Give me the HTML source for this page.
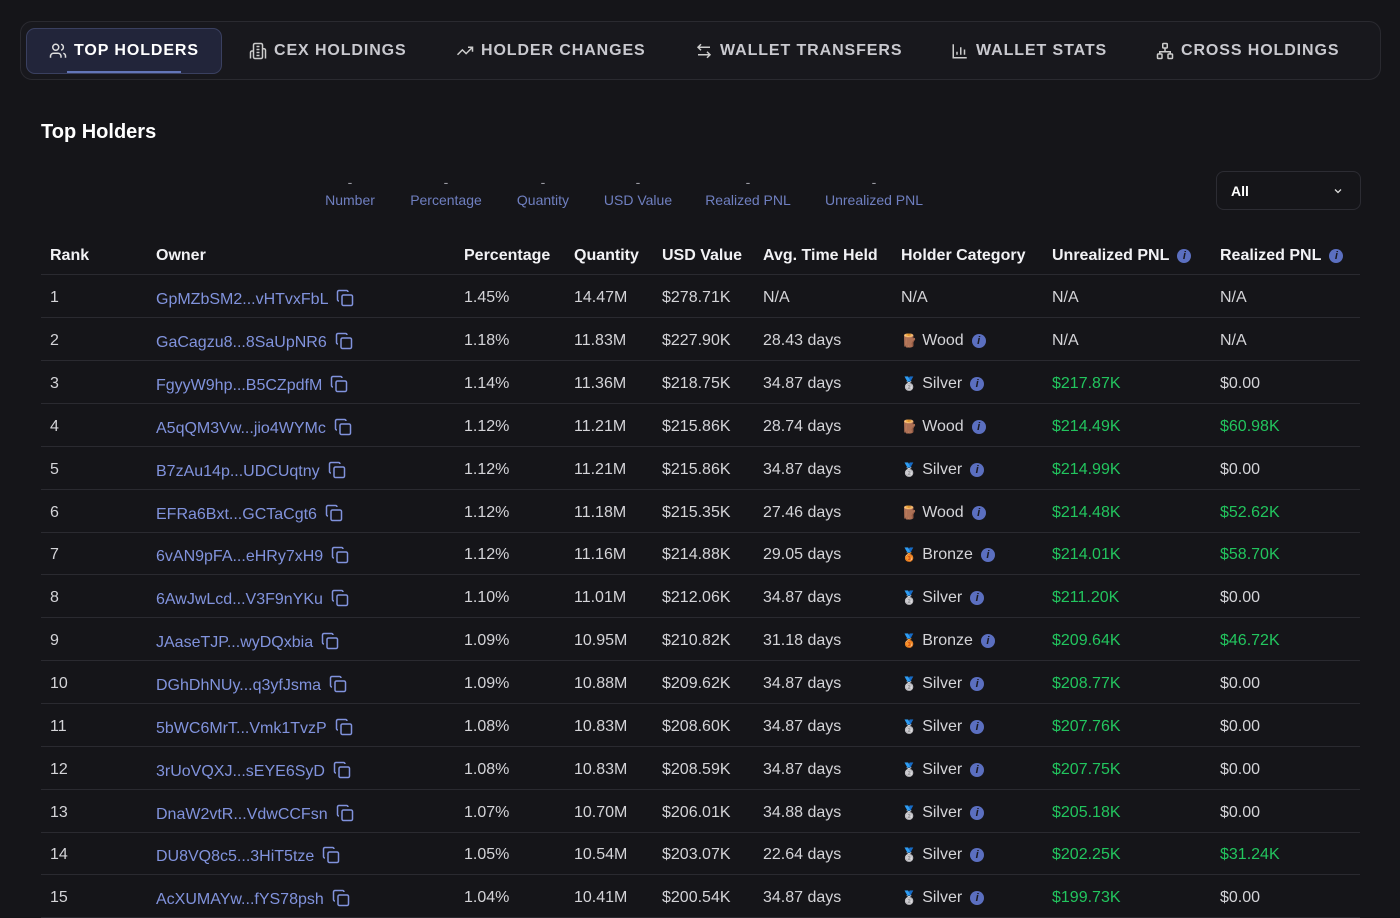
<!DOCTYPE html>
<html><head><meta charset="utf-8"><style>
*{margin:0;padding:0;box-sizing:border-box}
body{width:1400px;height:915px;background:#151519;font-family:"Liberation Sans",sans-serif;color:#e4e4e7;position:relative;overflow:hidden}
.bar{position:absolute;left:20px;top:21px;width:1361px;height:59px;border:1px solid #2a2a30;border-radius:12px;background:#18181d}
.tab{position:absolute;top:28px;height:46px;display:flex;align-items:center;font-size:16px;font-weight:bold;letter-spacing:0.9px;color:#c9c9cf}
.tab svg{margin-right:7px}
.act{left:26px;width:196px;border:1px solid #3a4060;border-radius:9px;background:#22253a;justify-content:center;color:#fff}
.act:after{content:"";position:absolute;left:40px;right:40px;bottom:0;height:2px;background:#6376b8}
h1{position:absolute;left:41px;top:121px;font-size:20px;font-weight:bold;color:#fff}
.st{position:absolute;top:173px;text-align:center;color:#6f7fc0;font-size:14px;line-height:18px}
.st b{display:block;color:#9a9aa2;font-weight:normal}
.sel{position:absolute;left:1216px;top:171px;width:145px;height:39px;border:1px solid #2c2c33;border-radius:8px;font-size:14px;font-weight:bold;color:#fff;padding:11px 14px}
.sel svg{position:absolute;right:16px;top:13px}
.r{position:absolute;left:41px;width:1319px;height:43px;border-bottom:1px solid #2a2a30;font-size:16px;color:#d4d4d8}
.r span{position:absolute;top:14px;white-space:nowrap}
.hd{font-weight:bold;color:#f2f2f5}
.c0{left:9px}.c1{left:115px}.c2{left:423px}.c3{left:533px}.c4{left:621px}.c5{left:722px}.c6{left:860px}.c7{left:1011px}.c8{left:1179px}
.own{color:#8193dd}
.g{color:#22c55e}
.i{display:inline-block;width:14px;height:14px;border-radius:50%;background:#5b6fc0;color:#1a1a22;font-size:11px;font-weight:bold;text-align:center;line-height:14px;vertical-align:1px;margin-left:8px}
.cp{display:inline-block;vertical-align:-3px;margin-left:8px}
.e{font-size:13px;margin-right:5px}
</style></head><body>
<div class="bar"></div>
<div class="tab act"><svg width="18" height="18" viewBox="0 0 24 24" fill="none" stroke="#ddd" stroke-width="2"><circle cx="9" cy="7" r="4"/><path d="M2 21v-2a4 4 0 0 1 4-4h6a4 4 0 0 1 4 4v2M16 3.1a4 4 0 0 1 0 7.8M22 21v-2a4 4 0 0 0-3-3.9"/></svg>TOP HOLDERS</div>
<div class="tab" style="left:249px"><svg width="18" height="18" viewBox="0 0 24 24" fill="none" stroke="#ccc" stroke-width="2"><rect x="6" y="2" width="12" height="20" rx="2"/><path d="M6 12H4a2 2 0 0 0-2 2v8M18 9h2a2 2 0 0 1 2 2v11M10 6h4M10 10h4M10 14h4M10 18h4"/></svg>CEX HOLDINGS</div>
<div class="tab" style="left:456px"><svg width="18" height="18" viewBox="0 0 24 24" fill="none" stroke="#ccc" stroke-width="2"><path d="M22 7l-8.5 8.5-5-5L2 17M16 7h6v6"/></svg>HOLDER CHANGES</div>
<div class="tab" style="left:695px"><svg width="18" height="18" viewBox="0 0 24 24" fill="none" stroke="#ccc" stroke-width="2"><path d="M8 3L4 7l4 4M4 7h16M16 21l4-4-4-4M20 17H4"/></svg>WALLET TRANSFERS</div>
<div class="tab" style="left:951px"><svg width="18" height="18" viewBox="0 0 24 24" fill="none" stroke="#ccc" stroke-width="2"><path d="M3 3v18h18M8 17v-4M13 17V7M18 17v-7"/></svg>WALLET STATS</div>
<div class="tab" style="left:1156px"><svg width="18" height="18" viewBox="0 0 24 24" fill="none" stroke="#ccc" stroke-width="2"><rect x="9" y="2" width="6" height="6" rx="1"/><rect x="2" y="16" width="6" height="6" rx="1"/><rect x="16" y="16" width="6" height="6" rx="1"/><path d="M5 16v-3h14v3M12 8v5"/></svg>CROSS HOLDINGS</div>
<h1>Top Holders</h1>
<div class="st" style="left:320px;width:60px"><b>-</b>Number</div>
<div class="st" style="left:406px;width:80px"><b>-</b>Percentage</div>
<div class="st" style="left:510px;width:66px"><b>-</b>Quantity</div>
<div class="st" style="left:600px;width:76px"><b>-</b>USD Value</div>
<div class="st" style="left:702px;width:92px"><b>-</b>Realized PNL</div>
<div class="st" style="left:820px;width:108px"><b>-</b>Unrealized PNL</div>
<div class="sel">All<svg width="12" height="12" viewBox="0 0 24 24" fill="none" stroke="#ddd" stroke-width="2.5"><path d="M6 9l6 6 6-6"/></svg></div>

<div class="r hd" style="top:232px"><span class="c0" style="top:15px">Rank</span><span class="c1" style="top:15px">Owner</span><span class="c2" style="top:15px">Percentage</span><span class="c3" style="top:15px">Quantity</span><span class="c4" style="top:15px">USD Value</span><span class="c5" style="top:15px">Avg. Time Held</span><span class="c6" style="top:15px">Holder Category</span><span class="c7" style="top:15px">Unrealized PNL<i class="i">i</i></span><span class="c8" style="top:15px">Realized PNL<i class="i">i</i></span></div>

<div class="r" style="top:275px"><span class="c0">1</span><span class="c1 own">GpMZbSM2...vHTvxFbL<svg class="cp" width="18" height="18" viewBox="0 0 24 24" fill="none" stroke="#8193dd" stroke-width="2"><rect x="8" y="8" width="14" height="14" rx="2"/><path d="M4 16c-1.1 0-2-.9-2-2V4c0-1.1.9-2 2-2h10c1.1 0 2 .9 2 2"/></svg></span><span class="c2">1.45%</span><span class="c3">14.47M</span><span class="c4">$278.71K</span><span class="c5">N/A</span><span class="c6">N/A</span><span class="c7">N/A</span><span class="c8">N/A</span></div>
<div class="r" style="top:318px"><span class="c0">2</span><span class="c1 own">GaCagzu8...8SaUpNR6<svg class="cp" width="18" height="18" viewBox="0 0 24 24" fill="none" stroke="#8193dd" stroke-width="2"><rect x="8" y="8" width="14" height="14" rx="2"/><path d="M4 16c-1.1 0-2-.9-2-2V4c0-1.1.9-2 2-2h10c1.1 0 2 .9 2 2"/></svg></span><span class="c2">1.18%</span><span class="c3">11.83M</span><span class="c4">$227.90K</span><span class="c5">28.43 days</span><span class="c6"><span class="e" style="position:static">🪵</span>Wood<i class="i">i</i></span><span class="c7">N/A</span><span class="c8">N/A</span></div>
<div class="r" style="top:361px"><span class="c0">3</span><span class="c1 own">FgyyW9hp...B5CZpdfM<svg class="cp" width="18" height="18" viewBox="0 0 24 24" fill="none" stroke="#8193dd" stroke-width="2"><rect x="8" y="8" width="14" height="14" rx="2"/><path d="M4 16c-1.1 0-2-.9-2-2V4c0-1.1.9-2 2-2h10c1.1 0 2 .9 2 2"/></svg></span><span class="c2">1.14%</span><span class="c3">11.36M</span><span class="c4">$218.75K</span><span class="c5">34.87 days</span><span class="c6"><span class="e" style="position:static">🥈</span>Silver<i class="i">i</i></span><span class="c7 g">$217.87K</span><span class="c8">$0.00</span></div>
<div class="r" style="top:404px"><span class="c0">4</span><span class="c1 own">A5qQM3Vw...jio4WYMc<svg class="cp" width="18" height="18" viewBox="0 0 24 24" fill="none" stroke="#8193dd" stroke-width="2"><rect x="8" y="8" width="14" height="14" rx="2"/><path d="M4 16c-1.1 0-2-.9-2-2V4c0-1.1.9-2 2-2h10c1.1 0 2 .9 2 2"/></svg></span><span class="c2">1.12%</span><span class="c3">11.21M</span><span class="c4">$215.86K</span><span class="c5">28.74 days</span><span class="c6"><span class="e" style="position:static">🪵</span>Wood<i class="i">i</i></span><span class="c7 g">$214.49K</span><span class="c8 g">$60.98K</span></div>
<div class="r" style="top:447px"><span class="c0">5</span><span class="c1 own">B7zAu14p...UDCUqtny<svg class="cp" width="18" height="18" viewBox="0 0 24 24" fill="none" stroke="#8193dd" stroke-width="2"><rect x="8" y="8" width="14" height="14" rx="2"/><path d="M4 16c-1.1 0-2-.9-2-2V4c0-1.1.9-2 2-2h10c1.1 0 2 .9 2 2"/></svg></span><span class="c2">1.12%</span><span class="c3">11.21M</span><span class="c4">$215.86K</span><span class="c5">34.87 days</span><span class="c6"><span class="e" style="position:static">🥈</span>Silver<i class="i">i</i></span><span class="c7 g">$214.99K</span><span class="c8">$0.00</span></div>
<div class="r" style="top:490px"><span class="c0">6</span><span class="c1 own">EFRa6Bxt...GCTaCgt6<svg class="cp" width="18" height="18" viewBox="0 0 24 24" fill="none" stroke="#8193dd" stroke-width="2"><rect x="8" y="8" width="14" height="14" rx="2"/><path d="M4 16c-1.1 0-2-.9-2-2V4c0-1.1.9-2 2-2h10c1.1 0 2 .9 2 2"/></svg></span><span class="c2">1.12%</span><span class="c3">11.18M</span><span class="c4">$215.35K</span><span class="c5">27.46 days</span><span class="c6"><span class="e" style="position:static">🪵</span>Wood<i class="i">i</i></span><span class="c7 g">$214.48K</span><span class="c8 g">$52.62K</span></div>
<div class="r" style="top:532px"><span class="c0">7</span><span class="c1 own">6vAN9pFA...eHRy7xH9<svg class="cp" width="18" height="18" viewBox="0 0 24 24" fill="none" stroke="#8193dd" stroke-width="2"><rect x="8" y="8" width="14" height="14" rx="2"/><path d="M4 16c-1.1 0-2-.9-2-2V4c0-1.1.9-2 2-2h10c1.1 0 2 .9 2 2"/></svg></span><span class="c2">1.12%</span><span class="c3">11.16M</span><span class="c4">$214.88K</span><span class="c5">29.05 days</span><span class="c6"><span class="e" style="position:static">🥉</span>Bronze<i class="i">i</i></span><span class="c7 g">$214.01K</span><span class="c8 g">$58.70K</span></div>
<div class="r" style="top:575px"><span class="c0">8</span><span class="c1 own">6AwJwLcd...V3F9nYKu<svg class="cp" width="18" height="18" viewBox="0 0 24 24" fill="none" stroke="#8193dd" stroke-width="2"><rect x="8" y="8" width="14" height="14" rx="2"/><path d="M4 16c-1.1 0-2-.9-2-2V4c0-1.1.9-2 2-2h10c1.1 0 2 .9 2 2"/></svg></span><span class="c2">1.10%</span><span class="c3">11.01M</span><span class="c4">$212.06K</span><span class="c5">34.87 days</span><span class="c6"><span class="e" style="position:static">🥈</span>Silver<i class="i">i</i></span><span class="c7 g">$211.20K</span><span class="c8">$0.00</span></div>
<div class="r" style="top:618px"><span class="c0">9</span><span class="c1 own">JAaseTJP...wyDQxbia<svg class="cp" width="18" height="18" viewBox="0 0 24 24" fill="none" stroke="#8193dd" stroke-width="2"><rect x="8" y="8" width="14" height="14" rx="2"/><path d="M4 16c-1.1 0-2-.9-2-2V4c0-1.1.9-2 2-2h10c1.1 0 2 .9 2 2"/></svg></span><span class="c2">1.09%</span><span class="c3">10.95M</span><span class="c4">$210.82K</span><span class="c5">31.18 days</span><span class="c6"><span class="e" style="position:static">🥉</span>Bronze<i class="i">i</i></span><span class="c7 g">$209.64K</span><span class="c8 g">$46.72K</span></div>
<div class="r" style="top:661px"><span class="c0">10</span><span class="c1 own">DGhDhNUy...q3yfJsma<svg class="cp" width="18" height="18" viewBox="0 0 24 24" fill="none" stroke="#8193dd" stroke-width="2"><rect x="8" y="8" width="14" height="14" rx="2"/><path d="M4 16c-1.1 0-2-.9-2-2V4c0-1.1.9-2 2-2h10c1.1 0 2 .9 2 2"/></svg></span><span class="c2">1.09%</span><span class="c3">10.88M</span><span class="c4">$209.62K</span><span class="c5">34.87 days</span><span class="c6"><span class="e" style="position:static">🥈</span>Silver<i class="i">i</i></span><span class="c7 g">$208.77K</span><span class="c8">$0.00</span></div>
<div class="r" style="top:704px"><span class="c0">11</span><span class="c1 own">5bWC6MrT...Vmk1TvzP<svg class="cp" width="18" height="18" viewBox="0 0 24 24" fill="none" stroke="#8193dd" stroke-width="2"><rect x="8" y="8" width="14" height="14" rx="2"/><path d="M4 16c-1.1 0-2-.9-2-2V4c0-1.1.9-2 2-2h10c1.1 0 2 .9 2 2"/></svg></span><span class="c2">1.08%</span><span class="c3">10.83M</span><span class="c4">$208.60K</span><span class="c5">34.87 days</span><span class="c6"><span class="e" style="position:static">🥈</span>Silver<i class="i">i</i></span><span class="c7 g">$207.76K</span><span class="c8">$0.00</span></div>
<div class="r" style="top:747px"><span class="c0">12</span><span class="c1 own">3rUoVQXJ...sEYE6SyD<svg class="cp" width="18" height="18" viewBox="0 0 24 24" fill="none" stroke="#8193dd" stroke-width="2"><rect x="8" y="8" width="14" height="14" rx="2"/><path d="M4 16c-1.1 0-2-.9-2-2V4c0-1.1.9-2 2-2h10c1.1 0 2 .9 2 2"/></svg></span><span class="c2">1.08%</span><span class="c3">10.83M</span><span class="c4">$208.59K</span><span class="c5">34.87 days</span><span class="c6"><span class="e" style="position:static">🥈</span>Silver<i class="i">i</i></span><span class="c7 g">$207.75K</span><span class="c8">$0.00</span></div>
<div class="r" style="top:790px"><span class="c0">13</span><span class="c1 own">DnaW2vtR...VdwCCFsn<svg class="cp" width="18" height="18" viewBox="0 0 24 24" fill="none" stroke="#8193dd" stroke-width="2"><rect x="8" y="8" width="14" height="14" rx="2"/><path d="M4 16c-1.1 0-2-.9-2-2V4c0-1.1.9-2 2-2h10c1.1 0 2 .9 2 2"/></svg></span><span class="c2">1.07%</span><span class="c3">10.70M</span><span class="c4">$206.01K</span><span class="c5">34.88 days</span><span class="c6"><span class="e" style="position:static">🥈</span>Silver<i class="i">i</i></span><span class="c7 g">$205.18K</span><span class="c8">$0.00</span></div>
<div class="r" style="top:832px"><span class="c0">14</span><span class="c1 own">DU8VQ8c5...3HiT5tze<svg class="cp" width="18" height="18" viewBox="0 0 24 24" fill="none" stroke="#8193dd" stroke-width="2"><rect x="8" y="8" width="14" height="14" rx="2"/><path d="M4 16c-1.1 0-2-.9-2-2V4c0-1.1.9-2 2-2h10c1.1 0 2 .9 2 2"/></svg></span><span class="c2">1.05%</span><span class="c3">10.54M</span><span class="c4">$203.07K</span><span class="c5">22.64 days</span><span class="c6"><span class="e" style="position:static">🥈</span>Silver<i class="i">i</i></span><span class="c7 g">$202.25K</span><span class="c8 g">$31.24K</span></div>
<div class="r" style="top:875px"><span class="c0">15</span><span class="c1 own">AcXUMAYw...fYS78psh<svg class="cp" width="18" height="18" viewBox="0 0 24 24" fill="none" stroke="#8193dd" stroke-width="2"><rect x="8" y="8" width="14" height="14" rx="2"/><path d="M4 16c-1.1 0-2-.9-2-2V4c0-1.1.9-2 2-2h10c1.1 0 2 .9 2 2"/></svg></span><span class="c2">1.04%</span><span class="c3">10.41M</span><span class="c4">$200.54K</span><span class="c5">34.87 days</span><span class="c6"><span class="e" style="position:static">🥈</span>Silver<i class="i">i</i></span><span class="c7 g">$199.73K</span><span class="c8">$0.00</span></div>
</body></html>
